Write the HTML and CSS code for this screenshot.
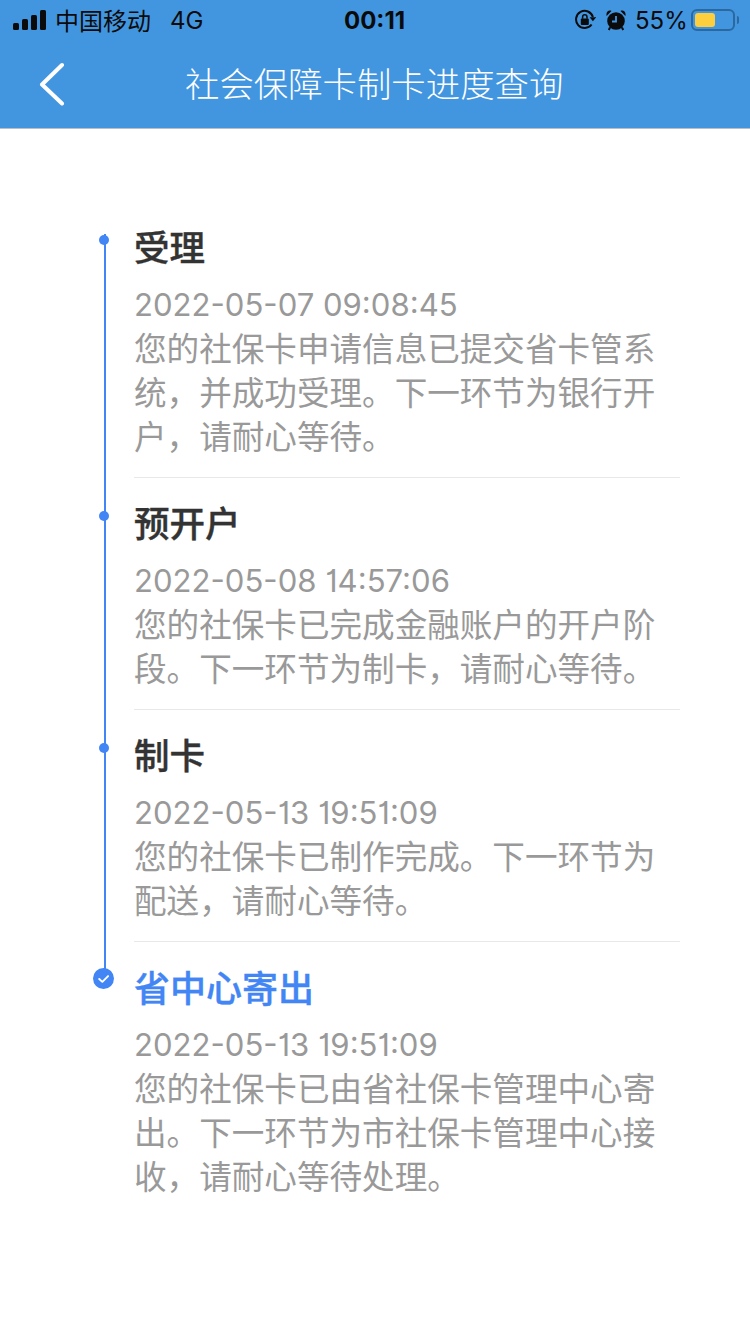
FILE: index.html
```html
<!DOCTYPE html>
<html lang="zh-CN">
<head>
<meta charset="utf-8">
<title>社会保障卡制卡进度查询</title>
<link rel="stylesheet" href="styles.css">
</head>
<body>
<header class="header">
  <div class="status">
    <svg class="signal" viewBox="0 0 33 20" width="33" height="20"><rect x="0" y="13" width="6" height="7" rx="1.5"/><rect x="9" y="9" width="6" height="11" rx="1.5"/><rect x="18" y="5" width="6" height="15" rx="1.5"/><rect x="27" y="0" width="6" height="20" rx="1.5"/></svg>
    <span class="carrier">中国移动</span>
    <span class="net">4G</span>
    <span class="time">00:11</span>
    <svg class="lock" viewBox="0 0 22 22" width="22" height="22"><path d="M17.6 15.500A8.600 8.600 0 1 1 18.900 8" fill="none" stroke="#0b0b0b" stroke-width="2"/><path d="M15.600 8.200h6.600l-3.300 4z" fill="#0b0b0b"/><rect x="6.800" y="9.500" width="8" height="6.500" rx="1" fill="#0b0b0b"/><path d="M8.600 9.800V8a2.200 2.200 0 0 1 4.400 0v1.800" fill="none" stroke="#0b0b0b" stroke-width="1.500"/></svg>
    <svg class="alarm" viewBox="0 0 20 22" width="20" height="22"><circle cx="10" cy="12" r="8.800" fill="#0b0b0b"/><path d="M.6 7 5.500 2C3 .4 -.4 2.800.6 7zM19.400 7 14.500 2C17 .4 20.400 2.800 19.400 7z" fill="#0b0b0b"/><path d="M4 18.500 2.800 21M16 18.500l1.200 2.500" stroke="#0b0b0b" stroke-width="2"/><path d="M10 7v5.500H6" fill="none" stroke="#4296e0" stroke-width="1.800"/></svg>
    <span class="percent">55%</span>
    <span class="battery"><span class="battery-fill"></span></span>
    <span class="battery-cap"></span>
  </div>
  <div class="nav">
    <svg class="back" viewBox="0 0 26 44" width="26" height="44"><path d="M23 3 3 22.500 23 41.500" fill="none" stroke="#fff" stroke-width="4" stroke-linecap="round" stroke-linejoin="round"/></svg>
    <h1 class="nav-title">社会保障卡制卡进度查询</h1>
  </div>
</header>
<main class="timeline">
  <div class="rail"></div>
  <section class="step">
    <span class="dot"></span>
    <h2 class="step-title">受理</h2>
    <p class="step-date">2022-05-07 09:08:45</p>
    <p class="step-desc">您的社保卡申请信息已提交省卡管系统，并成功受理。下一环节为银行开户，请耐心等待。</p>
  </section>
  <section class="step">
    <span class="dot"></span>
    <h2 class="step-title">预开户</h2>
    <p class="step-date">2022-05-08 14:57:06</p>
    <p class="step-desc">您的社保卡已完成金融账户的开户阶段。下一环节为制卡，请耐心等待。</p>
  </section>
  <section class="step">
    <span class="dot"></span>
    <h2 class="step-title">制卡</h2>
    <p class="step-date">2022-05-13 19:51:09</p>
    <p class="step-desc">您的社保卡已制作完成。下一环节为配送，请耐心等待。</p>
  </section>
  <section class="step step-current">
    <svg class="check" viewBox="0 0 22 22" width="21" height="21"><circle cx="11" cy="11" r="11" fill="#4285f4"/><path d="M6.500 11.500 9.800 14.500 15.800 8.500" fill="none" stroke="#fff" stroke-width="2" stroke-linecap="round" stroke-linejoin="round"/></svg>
    <h2 class="step-title">省中心寄出</h2>
    <p class="step-date">2022-05-13 19:51:09</p>
    <p class="step-desc">您的社保卡已由省社保卡管理中心寄出。下一环节为市社保卡管理中心接收，请耐心等待处理。</p>
  </section>
</main>
</body>
</html>
```
FILE: styles.css
```css
* { box-sizing: border-box; }
html, body { margin: 0; padding: 0; }
body {
  width: 750px;
  height: 1334px;
  background: #fff;
  overflow: hidden;
  font-family: "Inter", "Noto Sans CJK SC", sans-serif;
}
.header {
  height: 129px;
  background: #4296e0;
  border-bottom: 1px solid #b9bfc6;
}
.status {
  height: 40px;
  display: flex;
  align-items: center;
  color: #0b0b0b;
  font-size: 24px;
  padding-left: 13px;
}
.signal { fill: #0b0b0b; flex: none; }
.carrier { margin: 0 0 2px 9px; width: 96px; font-family: "Noto Sans CJK SC", sans-serif; font-size: 24px; }
.net { margin-left: 19px; width: 32px; }
.time { margin-left: 142px; width: 64px; font-weight: 700; font-size: 24px; }
.lock { margin-left: 166px; flex: none; }
.alarm { margin-left: 10px; flex: none; }
.percent { margin-left: 9px; width: 52px; font-size: 24px; }
.battery {
  margin-left: 4px;
  width: 44px;
  height: 22px;
  border: 2px solid #2a689f;
  border-radius: 6px;
  padding: 2px;
  flex: none;
}
.battery-fill {
  display: block;
  width: 20px;
  height: 100%;
  background: #fdcf3f;
  border-radius: 3px;
}
.battery-cap {
  margin-left: 2px;
  width: 2px;
  height: 8px;
  background: #2a689f;
  border-radius: 0 2px 2px 0;
}
.nav {
  height: 88px;
  display: flex;
  align-items: center;
  padding-left: 39px;
}
.back { flex: none; }
.nav-title {
  margin: 0 0 4px 120px;
  font-family: "Noto Sans CJK SC", sans-serif;
  font-size: 34.4px;
  font-weight: 300;
  line-height: 48px;
  color: #fff;
  white-space: nowrap;
}
.timeline {
  position: relative;
  margin: 73px 70px 0 134px;
}
.rail {
  position: absolute;
  left: -30px;
  top: 32px;
  width: 2px;
  height: 736px;
  background: #4285f4;
}
.step {
  position: relative;
  padding: 20px 0 20px;
  border-bottom: 1px solid #e8e8e8;
}
.step-current { border-bottom: 0; }
.dot {
  position: absolute;
  left: -35px;
  top: 33px;
  width: 10px;
  height: 10px;
  border-radius: 50%;
  background: #4285f4;
}
.check {
  position: absolute;
  left: -41px;
  top: 26px;
}
.step-title {
  margin: 0 0 13px;
  font-family: "Noto Sans CJK SC", sans-serif;
  font-size: 35.5px;
  font-weight: 500;
  -webkit-text-stroke: 0.4px currentColor;
  line-height: 48px;
  color: #333;
}
.step-current .step-title { color: #4285f4; font-size: 36px; }
.step-date {
  margin: 0;
  font-size: 31.1px;
  line-height: 44px;
  color: #999;
  font-feature-settings: "cv01";
}
.step-desc {
  margin: -2px 0 0;
  font-family: "Noto Sans CJK SC", sans-serif;
  font-size: 32.6px;
  line-height: 44px;
  color: #999;
}
```
